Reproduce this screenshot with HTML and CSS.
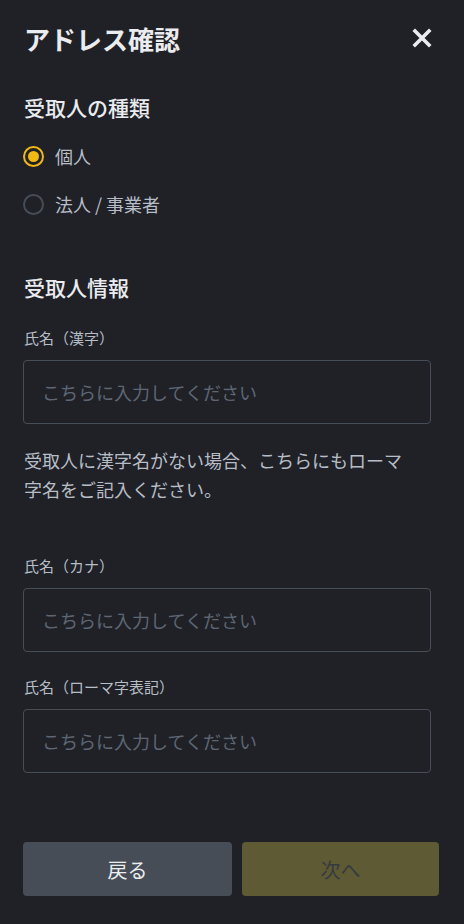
FILE: index.html
```html
<!DOCTYPE html>
<html lang="ja">
<head>
  <meta charset="UTF-8" />
  <meta name="viewport" content="width=device-width, initial-scale=1.0" />
  <title>アドレス確認</title>
  <link rel="stylesheet" href="styles.css">
</head>
<body>
  <div class="sheet">
    <div class="header">
      <h1>アドレス確認</h1>
      <svg class="close" width="20" height="20" viewBox="0 0 20 20">
        <path d="M3 3 L17 17 M17 3 L3 17" stroke="#EAECEF" stroke-width="3.6" stroke-linecap="square" />
      </svg>
    </div>

    <h2 class="section-title">受取人の種類</h2>
    <div class="radios">
      <label class="radio checked"><span class="dot"></span>個人</label>
      <label class="radio"><span class="dot"></span>法人 / 事業者</label>
    </div>

    <h2 class="section-title info">受取人情報</h2>

    <div class="field first">
      <div class="label">氏名（漢字）</div>
      <input type="text" placeholder="こちらに入力してください" />
    </div>
    <p class="hint">受取人に漢字名がない場合、こちらにもローマ字名をご記入ください。</p>

    <div class="field kana">
      <div class="label">氏名（カナ）</div>
      <input type="text" placeholder="こちらに入力してください" />
    </div>

    <div class="field">
      <div class="label">氏名（ローマ字表記）</div>
      <input type="text" placeholder="こちらに入力してください" />
    </div>

    <div class="actions">
      <button class="back">戻る</button>
      <button class="next">次へ</button>
    </div>
  </div>
</body>
</html>
```

FILE: styles.css
```css
body {
  margin: 0;
  background-color: #1f2127;
  font-family: "Noto Sans CJK JP", "Noto Sans", sans-serif;
  color: #eaecef;
}
.sheet {
  padding: 0 33px 0 23px;
  height: 924px;
  box-sizing: border-box;
}
.header {
  display: flex;
  justify-content: space-between;
  align-items: center;
  height: 76px;
}
.header h1 {
  margin: 0;
  font-size: 26px;
  font-weight: 700;
  margin-left: 1px;
}
.close {
  margin-right: -1px;
}
.section-title {
  margin: 0 0 0 1px;
  font-size: 21px;
  font-weight: 500;
  line-height: 30px;
  padding-top: 16px;
}
.section-title.info {
  padding-top: 55px;
}
.radios {
  display: flex;
  flex-direction: column;
  gap: 22px;
  padding-top: 21px;
}
.radio {
  display: flex;
  align-items: center;
  gap: 11px;
  font-size: 18px;
  line-height: 26px;
  color: #b7bdc6;
}
.dot {
  width: 17px;
  height: 17px;
  border: 2px solid #474d57;
  border-radius: 50%;
  display: flex;
  align-items: center;
  justify-content: center;
}
.radio.checked .dot {
  border-color: #f0b90b;
}
.radio.checked .dot::after {
  content: "";
  width: 11px;
  height: 11px;
  border-radius: 50%;
  background: #f0b90b;
}
.field {
  padding-top: 25px;
}
.field.first {
  padding-top: 26px;
}
.field.kana {
  padding-top: 52px;
}
.label {
  font-size: 15px;
  line-height: 20px;
  color: #b7bdc6;
  margin-bottom: 12px;
  margin-left: 1px;
}
input {
  display: block;
  width: 100%;
  height: 64px;
  box-sizing: border-box;
  background: transparent;
  border: 1px solid #474d57;
  border-radius: 4px;
  padding: 0 18px;
  font-family: "Noto Sans CJK JP", "Noto Sans", sans-serif;
  font-size: 18px;
  color: #eaecef;
}
input::placeholder {
  color: #5e6673;
}
.hint {
  margin: 0 0 0 1px;
  padding: 22px 16px 0 0;
  font-size: 18px;
  line-height: 29px;
  color: #b7bdc6;
}
.actions {
  display: flex;
  gap: 10px;
  margin-top: 69px;
  margin-right: -8px;
}
.actions button {
  height: 54px;
  border: none;
  border-radius: 4px;
  font-family: "Noto Sans CJK JP", "Noto Sans", sans-serif;
  font-size: 20px;
}
.back {
  width: 209px;
  background-color: #474d57;
  color: #eaecef;
}
.next {
  flex: 1;
  background-color: #5e5a33;
  color: #363940;
}
```
